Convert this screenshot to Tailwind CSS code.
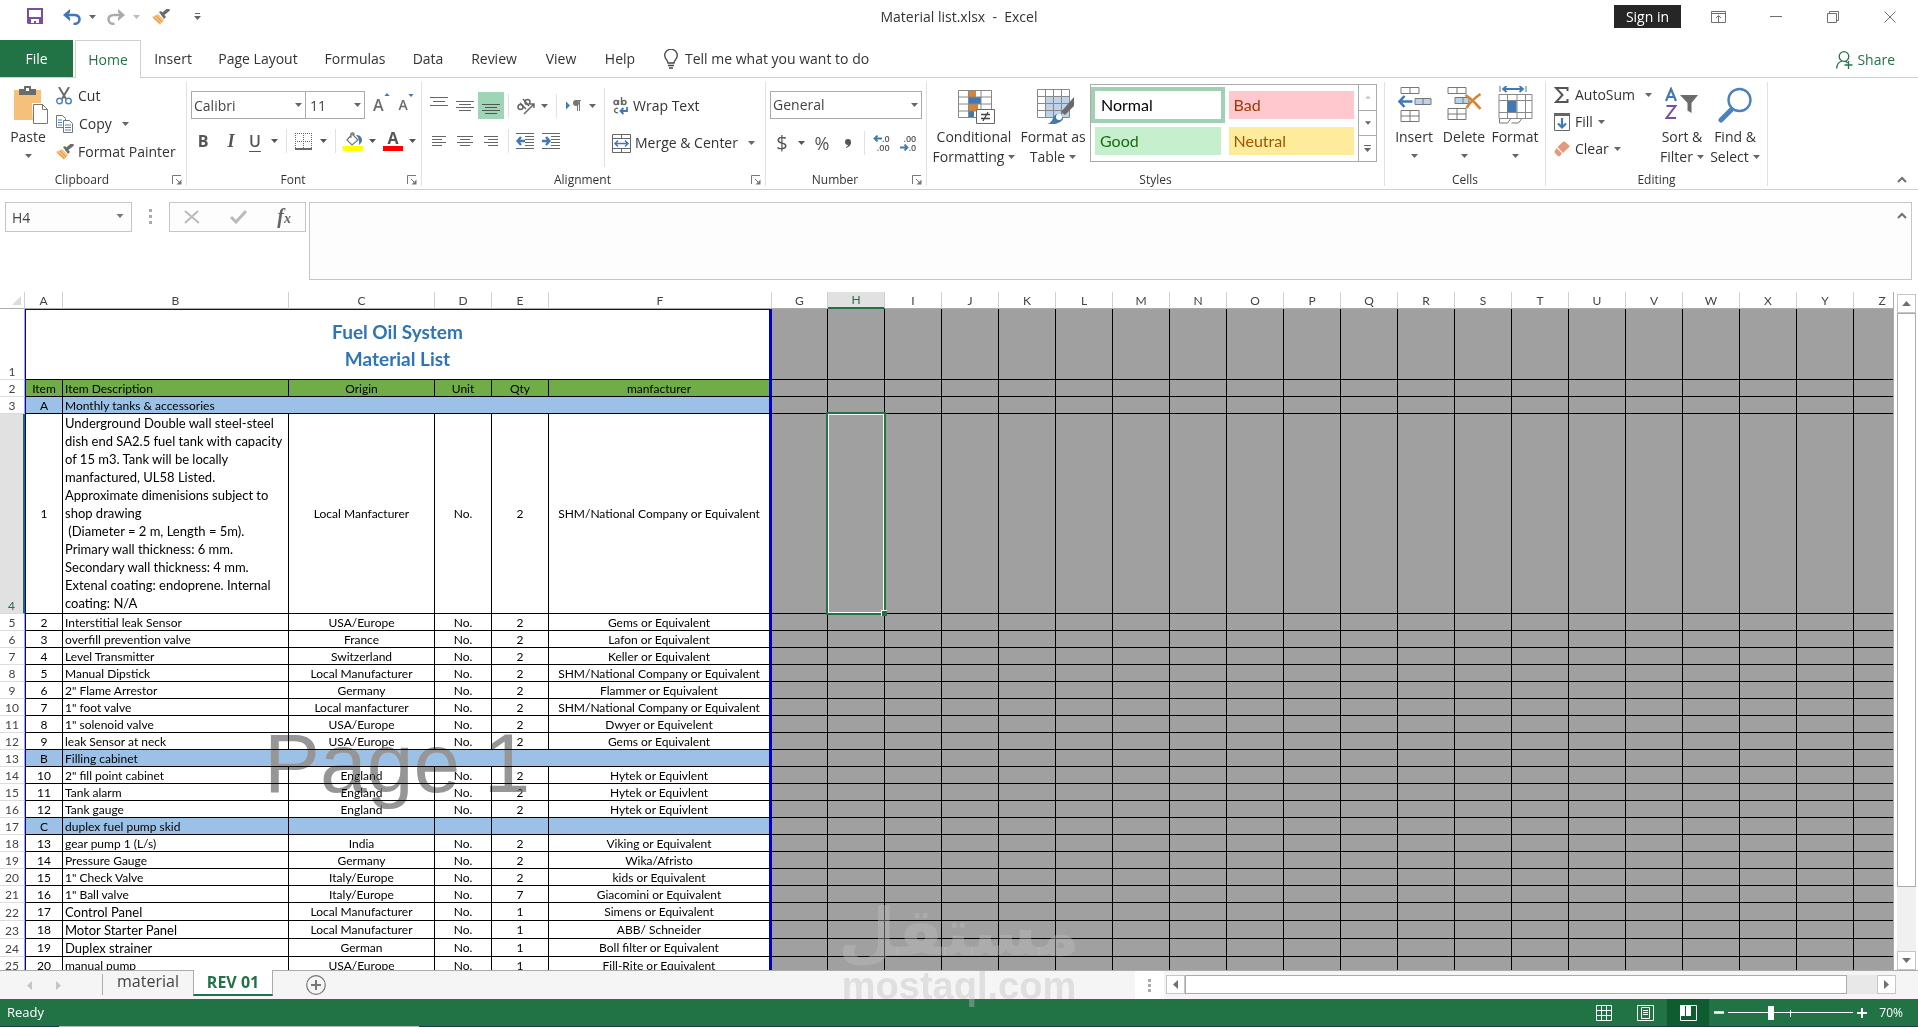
<!DOCTYPE html>
<html lang="en">
<head>
    <meta charset="UTF-8">
    <meta name="viewport" content="width=device-width, initial-scale=1.0">
    <title>Material list.xlsx - Excel</title>

    <!-- Tailwind CSS -->
    <script src="https://cdn.jsdelivr.net/npm/@tailwindcss/browser@4"></script>
</head>
<body class="relative flex h-screen flex-col overflow-hidden bg-white font-['Open_Sans',sans-serif] text-sm text-[#333]">

    <!-- Shared icons -->
    <svg class="hidden">
        <symbol id="caret" viewBox="0 0 7 4"><path d="M0 0h7L3.5 4z" fill="currentColor"/></symbol>
        <symbol id="launcher" viewBox="0 0 10 10"><path d="M.5 9V.5H9M4 4l4 4" fill="none" stroke="#777"/><path d="M9.500 4.500v5h-5z" fill="#777"/></symbol>
        <symbol id="brush" viewBox="0 0 18 16"><path d="M0 8l6-3 6 6-4 5z" fill="#f5c07a"/><path d="M2 9l6 5M4 7l6 6" stroke="#e0963c" fill="none"/><path d="M7 3l2-1 5 6-2 2z" fill="#6b6b6b"/><path d="M11 5l5-4" stroke="#6b6b6b" stroke-width="3.500" stroke-linecap="round"/></symbol>
        <symbol id="chevron-up" viewBox="0 0 10 7"><path d="M1 6l4-4 4 4" fill="none" stroke="#707070" stroke-width="2"/></symbol>
    </svg>

    <!-- Title bar -->
    <header class="grid h-10 shrink-0 grid-cols-3 items-start">
        <div class="flex items-center pt-2 pl-[27px]">
            <button aria-label="Save"><svg class="h-[17px] w-4" viewBox="0 0 16 17"><path d="M0 0h16v16H1l-1-1z" fill="#7a4ea0"/><path d="M2 2h12v7H2zM4 11h8v4H9v-2H7v2H4z" fill="#fff"/></svg></button>
            <button class="ml-5" aria-label="Undo"><svg class="h-4 w-[18px]" viewBox="0 0 18 16"><path d="M2 6h9c4 0 5.500 2 5.500 4.500S14 15 10.500 15" fill="none" stroke="#4178b5" stroke-width="2.600"/><path d="M7 0L0 6l7 6V8.500L4.500 6 7 3.500z" fill="#4178b5"/></svg></button>
            <button class="ml-2" aria-label="Undo history"><svg class="h-1 w-[7px] text-[#666]"><use href="#caret"/></svg></button>
            <button class="ml-[11px]" aria-label="Redo"><svg class="h-4 w-[18px]" viewBox="0 0 18 16"><path d="M16 6H7C3 6 1.500 8 1.500 10.500S4 15 7.500 15" fill="none" stroke="#ababab" stroke-width="2.600"/><path d="M11 0l7 6-7 6V8.500L13.500 6 11 3.500z" fill="#ababab"/></svg></button>
            <button class="ml-2" aria-label="Redo history"><svg class="h-1 w-[7px] text-[#bbb]"><use href="#caret"/></svg></button>
            <button class="ml-3" aria-label="Format Painter"><svg class="h-4 w-[18px]"><use href="#brush"/></svg></button>
            <button class="ml-6" aria-label="Customize toolbar"><svg class="h-[7px] w-[7px]" viewBox="0 0 7 7"><path d="M1 .5h5" stroke="#666"/><path d="M0 3h7L3.500 7z" fill="#666"/></svg></button>
        </div>
        <div class="pt-[7px] text-center leading-5 whitespace-pre">Material list.xlsx  -  Excel</div>
        <div class="flex items-center justify-end pt-[5px] pr-[22px]">
            <button class="mr-[30px] h-[23px] w-[67px] bg-[#262626] leading-[23px] text-white">Sign in</button>
            <button class="mr-11" aria-label="Ribbon display options"><svg class="h-3 w-[15px]" viewBox="0 0 15 12"><path d="M.5.5h14v11H.5zM.5 2.500h14M7.500 11V5M5 7l2.500-2.500L10 7" fill="none" stroke="#707070"/></svg></button>
            <button class="mr-[45px]" aria-label="Minimize"><svg class="h-3 w-3" viewBox="0 0 12 12"><path d="M0 5.500h12" stroke="#707070"/></svg></button>
            <button class="mr-[45px]" aria-label="Restore"><svg class="h-3 w-3" viewBox="0 0 12 12"><path d="M.5 2.500h9v9h-9zM2.500 2V.5h9v9H10" fill="none" stroke="#707070"/></svg></button>
            <button aria-label="Close"><svg class="h-3 w-3" viewBox="0 0 12 12"><path d="M.5.5l11 11M11.500.5l-11 11" stroke="#707070"/></svg></button>
        </div>
    </header>

    <!-- Ribbon tabs -->
    <nav class="flex h-[38px] shrink-0 border-b border-[#d0d0d0] leading-9">
        <button class="h-[37px] w-[73px] bg-[#217346] text-white">File</button>
        <button class="ml-[2px] h-[38px] w-[66px] border border-b-0 border-[#d0d0d0] bg-white text-[#217346]">Home</button>
        <button class="w-16">Insert</button>
        <button class="w-[106px]">Page Layout</button>
        <button class="w-[88px]">Formulas</button>
        <button class="w-[58px]">Data</button>
        <button class="w-[74px]">Review</button>
        <button class="w-[60px]">View</button>
        <button class="w-[58px]">Help</button>
        <button class="ml-[15px] flex items-center gap-[7px]">
            <svg class="h-5 w-[14px]" viewBox="0 0 14 20"><path d="M4 14c0-3-3.300-4-3.300-7.500a6.300 6.300 0 0 1 12.600 0C13.300 10 10 11 10 14zM4 16.500h6M5 19h4" fill="none" stroke="#444" stroke-width="1.300"/></svg>
            <span>Tell me what you want to do</span>
        </button>
        <button class="mt-[3px] mr-[23px] ml-auto flex items-center gap-1 text-[#217346]">
            <svg class="h-[19px] w-[17px]" viewBox="0 0 17 19"><circle cx="8" cy="5.500" r="4.800" fill="none" stroke="currentColor" stroke-width="1.300"/><path d="M.7 17.500c0-4 2-6.500 5.300-7.500M9.500 10l2 2M12.500 10v8M8.500 14h8" fill="none" stroke="currentColor" stroke-width="1.300"/></svg>
            <span>Share</span>
        </button>
    </nav>

    <!-- Ribbon -->
    <section class="flex h-28 shrink-0 border-b border-[#d0d0d0] pt-1 pb-[3px] leading-5">

        <!-- Clipboard -->
        <div class="flex w-[187px] shrink-0 flex-col border-r border-[#e1e1e1]">
            <div class="flex h-[91px]">
                <button class="flex w-14 flex-col items-center pt-1">
                    <svg class="ml-[6px] h-[38px] w-[34px]" viewBox="0 0 34 38"><path d="M0 4h27v30H0z" fill="#f5c07a"/><path d="M5 3h5V0h7v3h5v6H5z" fill="#6b6b6b"/><path d="M12 2h3v3h-3z" fill="#fff"/><path d="M18 17h10.500l6 6v14.500H19z" fill="#fff"/><path d="M19.500 18.500h9l5 5v14h-14zM28.500 18.500v5h5" fill="#fff" stroke="#777"/></svg>
                    <span class="mt-[3px]">Paste</span>
                    <svg class="mt-[7px] h-1 w-[7px] text-[#666]"><use href="#caret"/></svg>
                </button>
                <div class="flex flex-col">
                    <button class="flex h-7 items-center gap-[6px]">
                        <svg class="h-[18px] w-4" viewBox="0 0 16 18"><path d="M3 0l7 12M13 0L6 12" stroke="#6b6b6b" stroke-width="2"/><circle cx="3.500" cy="14" r="2.800" fill="none" stroke="#4a82bd" stroke-width="1.400"/><circle cx="12.500" cy="14" r="2.800" fill="none" stroke="#4a82bd" stroke-width="1.400"/></svg>
                        <span>Cut</span>
                    </button>
                    <button class="flex h-7 items-center gap-[6px]">
                        <svg class="h-[18px] w-[17px]" viewBox="0 0 17 18"><path d="M.5.5h6l3 3v9h-9z" fill="#fff" stroke="#777"/><path d="M2 5h4M2 7.500h4M2 10h4" stroke="#4a82bd"/><path d="M7.500 5.500h6l3 3v9h-9z" fill="#fff" stroke="#777"/><path d="M9 10h6M9 12.500h6M9 15h6" stroke="#4a82bd"/></svg>
                        <span>Copy</span>
                        <svg class="ml-1 h-1 w-[7px] text-[#666]"><use href="#caret"/></svg>
                    </button>
                    <button class="flex h-7 items-center gap-1">
                        <svg class="h-4 w-[18px]"><use href="#brush"/></svg>
                        <span>Format Painter</span>
                    </button>
                </div>
            </div>
            <div class="flex h-[13px] items-center pr-1 text-xs"><span class="flex-1 pr-2 text-center">Clipboard</span><button aria-label="Clipboard options"><svg class="h-[10px] w-[10px]"><use href="#launcher"/></svg></button></div>
        </div>

        <!-- Font -->
        <div class="flex w-[235px] shrink-0 flex-col border-r border-[#e1e1e1]">
            <div class="flex h-[91px] flex-col gap-[10px] pt-[9px] pl-1">
                <div class="flex h-7 items-center">
                    <div class="relative"><input aria-label="Font name" value="Calibri" class="h-7 w-[115px] border border-[#ababab] px-[2px] text-[#444]"><svg class="absolute top-3 right-1 h-1 w-[7px] text-[#666]"><use href="#caret"/></svg></div>
                    <div class="relative"><input aria-label="Font size" value="11" class="-ml-px h-7 w-[60px] border border-[#ababab] px-1 text-[#444]"><svg class="absolute top-3 right-1 h-1 w-[7px] text-[#666]"><use href="#caret"/></svg></div>
                    <button class="ml-2 flex items-start font-semibold text-[#6b6b6b]" aria-label="Increase font size"><span class="text-base">A</span><svg class="h-[3px] w-[6px] rotate-180 text-[#4178b5]"><use href="#caret"/></svg></button>
                    <button class="ml-[9px] flex items-start font-semibold text-[#6b6b6b]" aria-label="Decrease font size"><span class="text-sm leading-[22px]">A</span><svg class="h-[3px] w-[6px] text-[#4178b5]"><use href="#caret"/></svg></button>
                </div>
                <div class="flex h-6 items-center text-[#555]">
                    <button class="w-6 text-base font-bold">B</button>
                    <button class="ml-1 w-6 font-['Liberation_Serif',serif] text-lg font-bold italic">I</button>
                    <button class="w-6 text-base font-semibold underline underline-offset-4">U</button>
                    <svg class="ml-1 h-1 w-[7px]"><use href="#caret"/></svg>
                    <i class="ml-2 h-6 w-px bg-[#e1e1e1]"></i>
                    <button class="ml-2" aria-label="Borders"><svg class="h-[17px] w-[17px]" viewBox="0 0 17 17"><path d="M.5 0v16M8.500 0v16M16.500 0v16M0 .5h17M0 8.500h17" stroke="#666" stroke-dasharray="1 1"/><path d="M0 16h17" stroke="#666" stroke-width="2"/></svg></button>
                    <svg class="ml-2 h-1 w-[7px]"><use href="#caret"/></svg>
                    <i class="ml-2 h-6 w-px bg-[#e1e1e1]"></i>
                    <button class="ml-[7px]" aria-label="Fill color"><svg class="h-5 w-5" viewBox="0 0 20 20"><path d="M9 3l6 6-6 5-5-5zM8 7V2.500a2 2 0 0 1 3 0V5" fill="#fff" stroke="#777" stroke-width="1.200"/><path d="M13 4c4 0 6 2 6 6-1 2-2 3-3 4 .5-4 0-7-3-10z" fill="#4178b5"/><path d="M0 15h20v5H0z" fill="#ff0"/></svg></button>
                    <svg class="ml-[6px] h-1 w-[7px]"><use href="#caret"/></svg>
                    <button class="ml-[7px] flex h-5 w-5 flex-col items-center text-base leading-[15px] font-bold" aria-label="Font color">A<span class="h-[5px] w-5 shrink-0 bg-[#f00]"></span></button>
                    <svg class="ml-[6px] h-1 w-[7px]"><use href="#caret"/></svg>
                </div>
            </div>
            <div class="flex h-[13px] items-center pr-1 text-xs"><span class="flex-1 pr-2 text-center">Font</span><button aria-label="Font options"><svg class="h-[10px] w-[10px]"><use href="#launcher"/></svg></button></div>
        </div>

        <!-- Alignment -->
        <div class="flex w-[344px] shrink-0 flex-col border-r border-[#e1e1e1]">
            <div class="flex h-[91px]">
                <div class="flex w-[182px] flex-col gap-[10px] pt-[10px] pl-1">
                    <div class="flex h-[27px] items-center">
                        <button class="flex w-[26px] justify-center" aria-label="Top align"><svg class="h-5 w-[18px]" viewBox="0 0 18 20"><path d="M0 1.500h18M3 5.500h12M0 9.500h18" stroke="#666"/></svg></button>
                        <button class="flex w-[26px] justify-center" aria-label="Middle align"><svg class="h-5 w-[18px]" viewBox="0 0 18 20"><path d="M0 5.500h18M3 8.500h12M0 11.500h18M3 14.500h12" stroke="#666"/></svg></button>
                        <button class="flex h-[27px] w-[26px] items-center justify-center bg-[#9fd5b7]" aria-label="Bottom align"><svg class="h-5 w-[18px]" viewBox="0 0 18 20"><path d="M0 8.500h18M3 11.500h12M0 14.500h18M3 17.500h12" stroke="#555"/></svg></button>
                        <i class="ml-1 h-6 w-px bg-[#e1e1e1]"></i>
                        <button class="ml-[7px]" aria-label="Orientation"><svg class="h-[18px] w-5" viewBox="0 0 20 18"><g fill="none" stroke="#666" stroke-width="1.500"><circle cx="4.500" cy="10" r="2.500"/><path d="M4 6l6 6M7 2l6 7"/><circle cx="11.500" cy="5" r="2.500"/><path d="M8 17L18 7M14 7h4v4"/></g></svg></button>
                        <svg class="ml-[5px] h-1 w-[7px] text-[#666]"><use href="#caret"/></svg>
                        <i class="ml-[8px] h-6 w-px bg-[#e1e1e1]"></i>
                        <button class="ml-[9px]" aria-label="Text direction"><svg class="h-3 w-[15px]" viewBox="0 0 15 12"><path d="M0 1.500l4 4-4 4z" fill="#4178b5"/><path d="M9 0h6v1H9zM11 0h1v11h-1zM13 0h1v11h-1z" fill="#777"/><circle cx="10" cy="3" r="3" fill="#777"/></svg></button>
                        <svg class="ml-2 h-1 w-[7px] text-[#666]"><use href="#caret"/></svg>
                    </div>
                    <div class="flex h-6 items-center">
                        <button class="flex w-[26px] justify-center" aria-label="Align left"><svg class="h-[11px] w-[14px]" viewBox="0 0 14 11"><path d="M0 .5h14M0 3.500h10M0 6.500h14M0 9.500h10" stroke="#666"/></svg></button>
                        <button class="flex w-[26px] justify-center" aria-label="Center"><svg class="h-[11px] w-4" viewBox="0 0 16 11"><path d="M0 .5h16M3 3.500h10M0 6.500h16M3 9.500h10" stroke="#666"/></svg></button>
                        <button class="flex w-[26px] justify-center" aria-label="Align right"><svg class="h-[11px] w-[14px]" viewBox="0 0 14 11"><path d="M0 .5h14M4 3.500h10M0 6.500h14M4 9.500h10" stroke="#666"/></svg></button>
                        <i class="ml-1 h-6 w-px bg-[#e1e1e1]"></i>
                        <button class="ml-[7px]" aria-label="Decrease indent"><svg class="h-4 w-[18px]" viewBox="0 0 18 16"><path d="M0 .5h18M9 3.500h9M9 6.500h9M9 9.500h9M9 12.500h9M0 15.500h18" stroke="#666"/><path d="M1 8h8M5 4L1.500 8 5 12" fill="none" stroke="#4178b5" stroke-width="2.400"/></svg></button>
                        <button class="ml-2" aria-label="Increase indent"><svg class="h-4 w-[18px]" viewBox="0 0 18 16"><path d="M0 .5h18M9 3.500h9M9 6.500h9M9 9.500h9M9 12.500h9M0 15.500h18" stroke="#666"/><path d="M0 8h7M4 4l3.500 4L4 12" fill="none" stroke="#4178b5" stroke-width="2.400"/></svg></button>
                    </div>
                </div>
                <div class="my-[6px] flex flex-1 flex-col gap-[9px] border-l border-[#e1e1e1] pt-1 pl-[7px]">
                    <button class="flex h-7 items-center gap-1">
                        <svg class="h-[18px] w-[17px]" viewBox="0 0 17 18"><g fill="none" stroke="#666" stroke-width="1.400"><circle cx="4" cy="5.500" r="2"/><path d="M6.500 3v5"/><path d="M9.500 0v8"/><circle cx="12" cy="5.500" r="2"/><path d="M6 11.500a2.300 2.300 0 1 0 0 4"/></g><path d="M15 10v4H9M11.500 11L8.500 14l3 3" fill="none" stroke="#4178b5" stroke-width="1.800"/></svg>
                        <span>Wrap Text</span>
                    </button>
                    <button class="flex h-7 items-center gap-1">
                        <svg class="h-[19px] w-[19px]" viewBox="0 0 19 19"><path d="M.5.5h18v18H.5zM.5 4.500h18M.5 14.500h18M9.500.5v4M9.500 14.500v4" fill="none" stroke="#666"/><path d="M3 9.500h13M6 6.500l-3 3 3 3M13 6.500l3 3-3 3" fill="none" stroke="#4178b5" stroke-width="1.500"/></svg>
                        <span>Merge &amp; Center</span>
                        <svg class="ml-[6px] h-1 w-[7px] text-[#666]"><use href="#caret"/></svg>
                    </button>
                </div>
            </div>
            <div class="flex h-[13px] items-center pr-1 text-xs"><span class="flex-1 pr-2 text-center">Alignment</span><button aria-label="Alignment options"><svg class="h-[10px] w-[10px]"><use href="#launcher"/></svg></button></div>
        </div>

        <!-- Number -->
        <div class="flex w-[161px] shrink-0 flex-col border-r border-[#e1e1e1]">
            <div class="flex h-[91px] flex-col gap-[10px] pt-[9px] pl-1">
                <div class="relative w-[152px]">
                    <select aria-label="Number format" class="h-7 w-full appearance-none border border-[#ababab] pl-[2px] text-[#444]">
                        <option>General</option>
                    </select>
                    <svg class="pointer-events-none absolute top-3 right-1 h-1 w-[7px] text-[#666]"><use href="#caret"/></svg>
                </div>
                <div class="flex h-7 items-center pl-1 text-[#555]">
                    <button class="w-4 text-xl">$</button>
                    <svg class="ml-2 h-1 w-[7px]"><use href="#caret"/></svg>
                    <button class="ml-[7px] w-5 text-lg">%</button>
                    <button class="ml-2 w-4" aria-label="Comma style"><svg class="mx-auto h-[9px] w-[6px]" viewBox="0 0 6 9"><circle cx="3" cy="3" r="3" fill="#555"/><path d="M6 3c0 3-1.500 5-5 6v-1c2-1 2.500-2 2.500-3z" fill="#555"/></svg></button>
                    <i class="ml-2 h-6 w-px bg-[#e1e1e1]"></i>
                    <button class="ml-[8px] flex flex-col text-right text-[9px] leading-[9px] font-semibold" aria-label="Increase decimal"><span class="flex items-center"><svg class="h-[7px] w-[9px]" viewBox="0 0 9 7"><path d="M2 3.500h7M4.500.5l-3 3 3 3" fill="none" stroke="#4178b5" stroke-width="1.800"/></svg>.0</span><span>.00</span></button>
                    <button class="ml-[10px] flex flex-col text-right text-[9px] leading-[9px] font-semibold" aria-label="Decrease decimal"><span>.00</span><span class="flex items-center"><svg class="h-[7px] w-[9px]" viewBox="0 0 9 7"><path d="M0 3.500h7M4.500.5l3 3-3 3" fill="none" stroke="#4178b5" stroke-width="1.800"/></svg>.0</span></button>
                </div>
            </div>
            <div class="flex h-[13px] items-center pr-1 text-xs"><span class="flex-1 pr-2 text-center">Number</span><button aria-label="Number options"><svg class="h-[10px] w-[10px]"><use href="#launcher"/></svg></button></div>
        </div>

        <!-- Styles -->
        <div class="flex w-[458px] shrink-0 flex-col border-r border-[#e1e1e1]">
            <div class="flex h-[91px] pl-1">
                <button class="flex w-[86px] flex-col items-center pt-2">
                    <svg class="ml-1 h-[34px] w-[37px]" viewBox="0 0 37 34"><path d="M11 0h7v7h-7zM11 14h9v7h-9z" fill="#d9822f"/><path d="M11 7h12v7H11zM11 21h5v6h-5z" fill="#4178b5"/><path d="M.5.5h33v27H.5zM.5 7h33M.5 14h33M.5 21h33M10.500.5v27M23 .5v27" fill="none" stroke="#888"/><path d="M18.500 19.500h18v14h-18z" fill="#fff" stroke="#666"/><path d="M23 24.500h9M23 28.500h9M30 22l-5 9" stroke="#444" stroke-width="1.300"/></svg>
                    <span class="mt-[3px]">Conditional</span>
                    <span class="flex items-center gap-1">Formatting <svg class="h-1 w-[7px] text-[#666]"><use href="#caret"/></svg></span>
                </button>
                <button class="flex w-[72px] flex-col items-center pt-[7px]">
                    <svg class="ml-1 h-[35px] w-[37px]" viewBox="0 0 37 35"><path d="M8 8h25v20H8z" fill="#bcd3ea"/><path d="M.5.5h32v28H.5zM.5 7.500h32M.5 14.500h32M.5 21.500h32M8.500.5v28M16.500.5v28M24.500.5v28" fill="none" stroke="#888"/><path d="M37 8v9L28 26l-4-3z" fill="#6b6b6b"/><path d="M10 35c5-1 5-5 8-9 3-2 8 0 8 4-3 5-10 6-16 5z" fill="#4178b5"/><circle cx="22" cy="28" r="3" fill="#fff"/></svg>
                    <span class="mt-[3px] whitespace-nowrap">Format as</span>
                    <span class="flex items-center gap-1">Table <svg class="h-1 w-[7px] text-[#666]"><use href="#caret"/></svg></span>
                </button>
                <div class="mt-[2px] ml-px flex h-[78px] w-[287px] border border-[#ababab] font-['Lato',sans-serif] text-base">
                    <div class="grid flex-1 grid-cols-2 gap-[8px] py-[6px] pr-1 pl-1 text-left">
                        <button class="bg-white pl-[6px] text-left text-black outline-4 outline-[#9fd1b5]">Normal</button>
                        <button class="bg-[#ffc7ce] pl-[5px] text-left text-[#9c3a06]">Bad</button>
                        <button class="bg-[#c6efce] pl-[5px] text-left text-[#1c6a10]">Good</button>
                        <button class="bg-[#ffeb9c] pl-[5px] text-left text-[#9c5700]">Neutral</button>
                    </div>
                    <div class="flex w-[18px] flex-col border-l border-[#ababab]">
                        <button class="flex flex-1 items-center justify-center text-[#ccc]" aria-label="Scroll styles up"><svg class="h-1 w-[6px] rotate-180"><use href="#caret"/></svg></button>
                        <button class="flex flex-1 items-center justify-center border-y border-[#ababab] text-[#666]" aria-label="Scroll styles down"><svg class="h-1 w-[6px]"><use href="#caret"/></svg></button>
                        <button class="flex flex-1 items-center justify-center text-[#666]" aria-label="More styles"><svg class="h-[7px] w-[7px]" viewBox="0 0 7 7"><path d="M0 .5h7" stroke="#666"/><path d="M0 3h7L3.500 7z" fill="#666"/></svg></button>
                    </div>
                </div>
            </div>
            <div class="h-[13px] text-center text-xs leading-[13px]">Styles</div>
        </div>

        <!-- Cells -->
        <div class="flex w-[161px] shrink-0 flex-col border-r border-[#e1e1e1]">
            <div class="flex h-[91px] pl-1">
                <button class="flex w-[50px] flex-col items-center pt-1">
                    <svg class="h-[38px] w-[35px]" viewBox="0 0 34 38"><path d="M3.500 1.500h18v6h-18zM12.500 1.500v6M3.500 24.500h18v11h-18zM3.500 30h18M12.500 24.500v11" fill="none" stroke="#777"/><path d="M17.500 12.500h16v6h-16zM25.500 12.500v6" fill="#bcd3ea" stroke="#777"/><path d="M2 15.500h13M7 10l-5 5.500L7 21" fill="none" stroke="#4178b5" stroke-width="2.600"/></svg>
                    <span class="mt-[3px]">Insert</span>
                    <svg class="mt-[7px] h-1 w-[7px] text-[#666]"><use href="#caret"/></svg>
                </button>
                <button class="flex w-[50px] flex-col items-center pt-1">
                    <svg class="h-[38px] w-[35px]" viewBox="0 0 34 38"><path d="M.5 1.500h18v6H.5zM9.500 1.500v6M.5 22.500h18v11H.5zM.5 28h18M9.500 22.500v11" fill="none" stroke="#777"/><path d="M7.500 11.500h14v6h-14zM15.500 11.500v6" fill="#bcd3ea" stroke="#777"/><path d="M18 9c6 4 11 9 15 14M33 8c-6 4-11 9-14 14" fill="none" stroke="#d9822f" stroke-width="2.600"/></svg>
                    <span class="mt-[3px]">Delete</span>
                    <svg class="mt-[7px] h-1 w-[7px] text-[#666]"><use href="#caret"/></svg>
                </button>
                <button class="flex w-[52px] flex-col items-center pt-1">
                    <svg class="h-[38px] w-[35px]" viewBox="0 0 34 38"><path d="M1.500 0v6M27.500 0v6" stroke="#4178b5"/><path d="M5 3h19M8 0L4.500 3 8 6M21 0l3.500 3L21 6" fill="none" stroke="#4178b5" stroke-width="1.800"/><path d="M.5 8.500h33v24H.5zM.5 14.500h33M.5 26.500h33M9 8.500v24M18.500 8.500v24M27 8.500v24" fill="none" stroke="#888"/><path d="M9 15h9v11H9z" fill="#4178b5"/><path d="M1 33v4h8l3-4M13 37h7l3-4" fill="none" stroke="#777"/></svg>
                    <span class="mt-[3px]">Format</span>
                    <svg class="mt-[7px] h-1 w-[7px] text-[#666]"><use href="#caret"/></svg>
                </button>
            </div>
            <div class="h-[13px] text-center text-xs leading-[13px]">Cells</div>
        </div>

        <!-- Editing -->
        <div class="flex w-[222px] shrink-0 flex-col border-r border-[#e1e1e1]">
            <div class="flex h-[91px] pl-2">
                <div class="flex w-[102px] flex-col">
                    <button class="flex h-[26px] items-center gap-[6px]">
                        <svg class="h-4 w-[15px]" viewBox="0 0 14 16"><path d="M13 4V1H1.500L8 8l-6.500 7H13v-3" fill="none" stroke="#555" stroke-width="2"/></svg>
                        <span>AutoSum</span>
                        <svg class="ml-1 h-1 w-[7px] text-[#666]"><use href="#caret"/></svg>
                    </button>
                    <button class="flex h-[27px] items-center gap-[5px]">
                        <svg class="h-[18px] w-4" viewBox="0 0 16 18"><path d="M.5 1.500h15v16H.5z" fill="#fff" stroke="#666"/><path d="M0 1.500h16" stroke="#666" stroke-width="3"/><path d="M8 5v9M4 10.500l4 4 4-4" fill="none" stroke="#4178b5" stroke-width="2.200"/></svg>
                        <span>Fill</span>
                        <svg class="h-1 w-[7px] text-[#666]"><use href="#caret"/></svg>
                    </button>
                    <button class="flex h-[27px] items-center gap-[5px]">
                        <svg class="h-4 w-4" viewBox="0 0 16 16"><path d="M3.500 6L9 .8q1-.8 2 0l4 3.400q.8 1 0 2L9 12z" fill="#e59a7d"/><path d="M2.500 7l5.500 5.500-2 2.500q-1 .8-2 0L.8 12q-.8-1 0-2z" fill="#e59a7d"/></svg>
                        <span>Clear</span>
                        <svg class="h-1 w-[7px] text-[#666]"><use href="#caret"/></svg>
                    </button>
                </div>
                <button class="flex w-[52px] flex-col items-center pt-[5px]">
                    <svg class="h-[37px] w-[34px]" viewBox="0 0 34 37"><path d="M1 14L6 2l5 12M3 10h6" fill="none" stroke="#4178b5" stroke-width="2.200"/><path d="M1.500 19h9l-9 12H11" fill="none" stroke="#7a4ea0" stroke-width="2"/><path d="M15 8h18l-6.500 8v10l-4-2.500V16z" fill="#6b6b6b"/></svg>
                    <span class="mt-[3px] whitespace-nowrap">Sort &amp;</span>
                    <span class="flex items-center gap-1">Filter <svg class="h-1 w-[7px] text-[#666]"><use href="#caret"/></svg></span>
                </button>
                <button class="flex w-[54px] flex-col items-center pt-1">
                    <svg class="h-[38px] w-[34px]" viewBox="0 0 34 38"><circle cx="21.500" cy="14" r="11" fill="none" stroke="#4a82bd" stroke-width="2.400"/><path d="M13 24L3 34" stroke="#4a82bd" stroke-width="5" stroke-linecap="round"/></svg>
                    <span class="mt-[3px] whitespace-nowrap">Find &amp;</span>
                    <span class="flex items-center gap-1">Select <svg class="h-1 w-[7px] text-[#666]"><use href="#caret"/></svg></span>
                </button>
            </div>
            <div class="h-[13px] text-center text-xs leading-[13px]">Editing</div>
        </div>

        <button class="mt-auto mr-[11px] mb-[3px] ml-auto" aria-label="Collapse the ribbon"><svg class="h-[7px] w-[10px]"><use href="#chevron-up"/></svg></button>
    </section>

    <!-- Formula bar -->
    <section class="mb-3 flex shrink-0 items-start pt-3 pr-[6px] pl-[5px]">
        <div class="relative"><input aria-label="Name box" value="H4" class="h-[30px] w-[127px] border border-[#c6c6c6] bg-[#fdfdfd] px-[6px] text-[#444]"><svg class="absolute top-3 right-2 h-1 w-[8px] text-[#777]"><use href="#caret"/></svg></div>
        <svg class="mt-[7px] ml-[17px] h-[15px] w-[3px]" viewBox="0 0 3 15"><path d="M0 0h3v3H0zM0 6h3v3H0zM0 12h3v3H0z" fill="#aaa"/></svg>
        <div class="ml-[17px] flex h-[30px] w-[137px] items-center justify-between border border-[#c6c6c6] bg-[#fdfdfd] px-[14px]">
            <button aria-label="Cancel"><svg class="h-[14px] w-[16px]" viewBox="0 0 16 14"><path d="M1 1l14 12M14 1L1 13" stroke="#bbb" stroke-width="2"/></svg></button>
            <button aria-label="Enter"><svg class="h-[14px] w-[17px]" viewBox="0 0 17 14"><path d="M1 7l5 5L16 1" fill="none" stroke="#bbb" stroke-width="3"/></svg></button>
            <button class="font-['Liberation_Serif',serif] text-xl leading-5 font-bold text-[#666] italic" aria-label="Insert function">f<span class="text-sm">x</span></button>
        </div>
        <div class="relative ml-[3px] h-[78px] flex-1">
            <textarea aria-label="Formula" class="block h-full w-full resize-none border border-[#c6c6c6] bg-[#fdfdfd]"></textarea>
            <button class="absolute top-[10px] right-[5px] flex" aria-label="Collapse formula bar"><svg class="h-[7px] w-[10px]"><use href="#chevron-up"/></svg></button>
        </div>
    </section>

    <!-- Sheet -->
    <main class="flex min-h-0 flex-1">
        <div class="relative flex-1 overflow-hidden border-r border-[#ababab]">
            <table id="sheet" class="w-0 table-fixed border-separate border-spacing-0 font-['Lato',sans-serif] text-xs leading-[14px] text-black"></table>
            <div class="pointer-events-none absolute top-[423px] left-[264px] font-['Liberation_Sans',sans-serif] text-[84px] leading-[97px] text-[#969696] mix-blend-darken">Page 1</div>
        </div>
        <div class="mt-[2px] mr-[2px] ml-[3px] flex w-[19px] flex-col bg-[#f0f0f0]">
            <button class="flex h-[19px] items-center justify-center border border-[#c6c6c6] bg-white text-[#707070]" aria-label="Scroll up"><svg class="h-[5px] w-[9px] rotate-180"><use href="#caret"/></svg></button>
            <div class="h-[574px] border border-[#ababab] bg-white"></div>
            <button class="mt-auto flex h-[19px] items-center justify-center border border-[#c6c6c6] bg-white text-[#707070]" aria-label="Scroll down"><svg class="h-[5px] w-[9px]"><use href="#caret"/></svg></button>
        </div>
    </main>

    <!-- Sheet tabs -->
    <footer class="flex h-[29px] shrink-0 items-start border-t border-[#ababab] bg-[#f5f5f5] text-base">
        <button class="mt-[10px] ml-[27px]" aria-label="Previous sheet"><svg class="h-[9px] w-[5px]" viewBox="0 0 5 9"><path d="M5 0v9L0 4.500z" fill="#c6c6c6"/></svg></button>
        <button class="mt-[10px] ml-6" aria-label="Next sheet"><svg class="h-[9px] w-[5px]" viewBox="0 0 5 9"><path d="M0 0v9l5-4.500z" fill="#c6c6c6"/></svg></button>
        <i class="mt-[3px] ml-[41px] h-[21px] w-px bg-[#ababab]"></i>
        <button class="w-[90px] leading-5 text-[#444]">material</button>
        <button class="-mt-px h-[26px] w-20 border-x border-b-2 border-x-[#ababab] border-b-[#217346] bg-white leading-5 font-bold text-[#217346]">REV 01</button>
        <button class="mt-1 ml-[33px]" aria-label="New sheet"><svg class="h-5 w-5" viewBox="0 0 20 20"><circle cx="10" cy="10" r="9.300" fill="none" stroke="#777" stroke-width="1.200"/><path d="M10 5v10M5 10h10" stroke="#777" stroke-width="2"/></svg></button>
        <div class="ml-auto flex h-full w-[29px] items-center justify-center bg-white"><svg class="h-[13px] w-[3px]" viewBox="0 0 3 13"><path d="M0 0h3v3H0zM0 5h3v3H0zM0 10h3v3H0z" fill="#aaa"/></svg></div>
        <div class="mt-1 mr-[22px] ml-[2px] flex h-[19px] w-[730px] bg-[#e8e8e8]">
            <button class="flex w-[19px] items-center justify-center border border-[#c6c6c6] bg-white" aria-label="Scroll left"><svg class="h-[9px] w-[5px]" viewBox="0 0 5 9"><path d="M5 0v9L0 4.500z" fill="#707070"/></svg></button>
            <div class="w-[662px] border border-[#ababab] bg-white"></div>
            <button class="ml-auto flex w-[19px] items-center justify-center border border-[#c6c6c6] bg-white" aria-label="Scroll right"><svg class="h-[9px] w-[5px]" viewBox="0 0 5 9"><path d="M0 0v9l5-4.500z" fill="#707070"/></svg></button>
        </div>
    </footer>

    <!-- Status bar -->
    <footer class="flex h-[27px] shrink-0 items-center bg-[#217346] pr-[15px] pl-[7px] text-[13px] text-white">
        <span>Ready</span>
        <button class="ml-auto" aria-label="Normal view"><svg class="h-4 w-4" viewBox="0 0 16 16"><path d="M.5.5h15v15H.5zM.5 5.500h15M.5 10.500h15M5.500.5v15M10.500.5v15" fill="none" stroke="#fff"/></svg></button>
        <button class="ml-[25px]" aria-label="Page layout view"><svg class="h-4 w-[17px]" viewBox="0 0 17 16"><path d="M.5.500h16v15H.5zM4.500 2.500h8v11h-8zM6 5.500h5M6 7.500h5M6 9.500h5" fill="none" stroke="#fff"/></svg></button>
        <button class="ml-[13px] flex h-full w-[42px] items-center justify-center bg-[#0e5c2f]" aria-label="Page break preview"><svg class="h-4 w-[17px]" viewBox="0 0 17 16"><path d="M.5.500h16v15H.5z" fill="none" stroke="#fff"/><path d="M0 0h5v11H0zM6 0h5v11H6z" fill="#fff"/></svg></button>
        <button class="ml-[5px]" aria-label="Zoom out"><svg class="h-[10px] w-[10px]" viewBox="0 0 10 10"><path d="M0 4.500h10" stroke="#fff" stroke-width="2.500"/></svg></button>
        <div class="relative ml-1 h-[14px] w-[125px]">
            <i class="absolute top-[4px] left-[62px] h-[7px] w-px bg-white"></i>
            <input type="range" aria-label="Zoom" min="0" max="100" value="33" class="block h-[14px] w-full appearance-none bg-[linear-gradient(#fff,#fff)] bg-[length:100%_1px] bg-center bg-no-repeat [&::-webkit-slider-thumb]:h-[14px] [&::-webkit-slider-thumb]:w-[6px] [&::-webkit-slider-thumb]:appearance-none [&::-webkit-slider-thumb]:bg-white">
        </div>
        <button class="ml-1" aria-label="Zoom in"><svg class="h-[10px] w-[10px]" viewBox="0 0 10 10"><path d="M0 5h10M5 0v10" stroke="#fff" stroke-width="2"/></svg></button>
        <span class="ml-3 text-xs">70%</span>
    </footer>
    <div class="flex h-px shrink-0 bg-[#1b3a4b]"><i class="ml-[59px] w-[360px] bg-[#b5bcb8]"></i></div>

    <!-- Site mark -->
    <div class="pointer-events-none absolute inset-x-0 bottom-[21px] flex flex-col items-center font-bold text-[#bfbfbf]/40">
        <span lang="ar" class="font-['DejaVu_Sans',sans-serif] text-[66px] leading-[66px]">مستقل</span>
        <span class="font-['Liberation_Sans',sans-serif] text-[38px] leading-[40px]">mostaql.com</span>
    </div>

    <script>
        const columns = [
            ['A', 38], ['B', 226], ['C', 146], ['D', 57], ['E', 57], ['F', 223], ['G', 56],
            ...'HIJKLMNOPQRSTUVWXYZ'.split('').map(letter => [letter, 57])
        ];

        const tankDescription = [
            'Underground Double wall steel-steel', 'dish end SA2.5 fuel tank with capacity', 'of 15 m3. Tank will be locally',
            'manfactured, UL58 Listed.', 'Approximate dimenisions subject to', 'shop drawing', ' (Diameter = 2 m, Length = 5m).',
            'Primary wall thickness: 6 mm.', 'Secondary wall thickness: 4 mm.', 'Extenal coating: endoprene. Internal', 'coating: N/A'
        ].join('\n');

        // height, fill, cells A-F; "merged" rows stretch B over C-F
        const rows = [
            { h: 71, title: ['Fuel Oil System', 'Material List'] },
            { h: 17, fill: 'bg-[#70ad47]', cells: ['Item', 'Item Description', 'Origin', 'Unit', 'Qty', 'manfacturer'] },
            { h: 17, fill: 'bg-[#9bc2e6]', merged: true, cells: ['A', 'Monthly tanks & accessories'] },
            { h: 200, tall: true, cells: ['1', tankDescription, 'Local Manfacturer', 'No.', '2', 'SHM/National Company or Equivalent'] },
            { h: 17, cells: ['2', 'Interstitial leak Sensor', 'USA/Europe', 'No.', '2', 'Gems or Equivalent'] },
            { h: 17, cells: ['3', 'overfill prevention valve', 'France', 'No.', '2', 'Lafon or Equivalent'] },
            { h: 17, cells: ['4', 'Level Transmitter', 'Switzerland', 'No.', '2', 'Keller or Equivalent'] },
            { h: 17, cells: ['5', 'Manual Dipstick', 'Local Manufacturer', 'No.', '2', 'SHM/National Company or Equivalent'] },
            { h: 17, cells: ['6', '2" Flame Arrestor', 'Germany', 'No.', '2', 'Flammer or Equivalent'] },
            { h: 17, cells: ['7', '1" foot valve', 'Local manfacturer', 'No.', '2', 'SHM/National Company or Equivalent'] },
            { h: 17, cells: ['8', '1" solenoid valve', 'USA/Europe', 'No.', '2', 'Dwyer or Equivelent'] },
            { h: 17, cells: ['9', 'leak Sensor at neck', 'USA/Europe', 'No.', '2', 'Gems or Equivalent'] },
            { h: 17, fill: 'bg-[#9bc2e6]', merged: true, cells: ['B', 'Filling cabinet'] },
            { h: 17, cells: ['10', '2" fill point cabinet', 'England', 'No.', '2', 'Hytek or Equivlent'] },
            { h: 17, cells: ['11', 'Tank alarm', 'England', 'No.', '2', 'Hytek or Equivlent'] },
            { h: 17, cells: ['12', 'Tank gauge', 'England', 'No.', '2', 'Hytek or Equivlent'] },
            { h: 17, fill: 'bg-[#9bc2e6]', cells: ['C', 'duplex fuel pump skid', '', '', '', ''] },
            { h: 17, cells: ['13', 'gear pump 1 (L/s)', 'India', 'No.', '2', 'Viking or Equivalent'] },
            { h: 17, cells: ['14', 'Pressure Gauge', 'Germany', 'No.', '2', 'Wika/Afristo'] },
            { h: 17, cells: ['15', '1" Check Valve', 'Italy/Europe', 'No.', '2', 'kids or Equivalent'] },
            { h: 17, cells: ['16', '1" Ball valve', 'Italy/Europe', 'No.', '7', 'Giacomini or Equivalent'] },
            { h: 18, large: true, cells: ['17', 'Control Panel', 'Local Manufacturer', 'No.', '1', 'Simens or Equivalent'] },
            { h: 18, large: true, cells: ['18', 'Motor Starter Panel', 'Local Manufacturer', 'No.', '1', 'ABB/ Schneider'] },
            { h: 18, large: true, cells: ['19', 'Duplex strainer', 'German', 'No.', '1', 'Boll filter or Equivalent'] },
            { h: 17, cells: ['20', 'manual pump', 'USA/Europe', 'No.', '1', 'Fill-Rite or Equivalent'] }
        ];

        const renderCells = (row) => {
            const fill = row.fill || 'bg-white';
            if (row.title) {
                return `<td colspan="6" class="border-t border-r-3 border-b border-l border-t-[#0000cd] border-r-[#0000cd] border-b-black border-l-[#0000cd] bg-white p-0 text-center text-[19px] leading-[27px] font-bold text-[#2e75b6]">${row.title.join('<br>')}</td>`;
            }
            return row.cells.map((text, i) => {
                const last = i === 5 || (row.merged && i === 1);
                const edge = last ? 'border-r-3 border-r-[#0000cd]' : 'border-r border-r-black';
                const left = i === 0 ? 'border-l border-l-[#0000cd]' : '';
                const align = i === 1 ? 'text-left pl-[2px]' : 'text-center';
                const top = row.h === 17 ? 'pt-[2px]' : '';
                const size = i === 1 && (row.tall || row.large) ? (row.tall ? 'text-[13px] leading-[18px] align-top' : 'text-[13px] leading-[14px]') : '';
                const span = row.merged && i === 1 ? 'colspan="5"' : '';
                return `<td ${span} class="border-b border-b-black p-0 whitespace-pre ${edge} ${left} ${align} ${top} ${size} ${fill}">${text}</td>`;
            }).join('');
        };

        const renderSheet = () => {
            const total = 25 + columns.reduce((sum, column) => sum + column[1], 0);
            const table = document.getElementById('sheet');
            table.style.width = `${total}px`;

            let html = `<colgroup><col style="width:25px">${columns.map(column => `<col style="width:${column[1]}px">`).join('')}</colgroup>`;
            html += `<thead class="text-[#444]"><tr style="height:17px">
                <th class="border-r border-b border-r-[#d0d0d0] border-b-[#ababab] p-0"><svg class="ml-3 block h-[9px] w-[9px]" viewBox="0 0 9 9"><path d="M9 0v9H0z" fill="#dcdcdc"/></svg></th>`;
            columns.forEach(([letter]) => {
                const state = letter === 'H' ? 'border-b-2 border-b-[#217346] bg-[#e1e1e1] text-[#217346]' : 'border-b border-b-[#ababab]';
                html += `<th scope="col" class="border-r border-r-[#d0d0d0] p-0 pt-px font-normal ${state}">${letter}</th>`;
            });
            html += '</tr></thead><tbody>';

            rows.forEach((row, index) => {
                const header = row.tall ? 'border-r-2 border-r-[#217346] bg-[#e1e1e1] text-[#217346]' : 'border-r border-r-[#ababab] text-[#444]';
                html += `<tr style="height:${row.h}px"><th scope="row" class="border-b border-b-[#dcdcdc] p-0 align-bottom font-normal ${header}">${index + 1}</th>`;
                html += renderCells(row);
                for (let i = 6; i < columns.length; i++) {
                    // active cell
                    if (row.tall && columns[i][0] === 'H') {
                        html += `<td class="relative border-r border-b border-black bg-[#a0a0a0] p-0">
                            <div class="absolute -inset-[2px] border-2 border-[#217346]"><div class="h-full border border-white"></div></div>
                            <div class="absolute -right-[3px] -bottom-[3px] h-[6px] w-[6px] border-t border-l border-white bg-[#217346]"></div></td>`;
                    } else {
                        html += '<td class="border-r border-b border-black bg-[#a0a0a0] p-0"></td>';
                    }
                }
                html += '</tr>';
            });
            table.innerHTML = html + '</tbody>';
        };

        renderSheet();
    </script>
</body>
</html>
